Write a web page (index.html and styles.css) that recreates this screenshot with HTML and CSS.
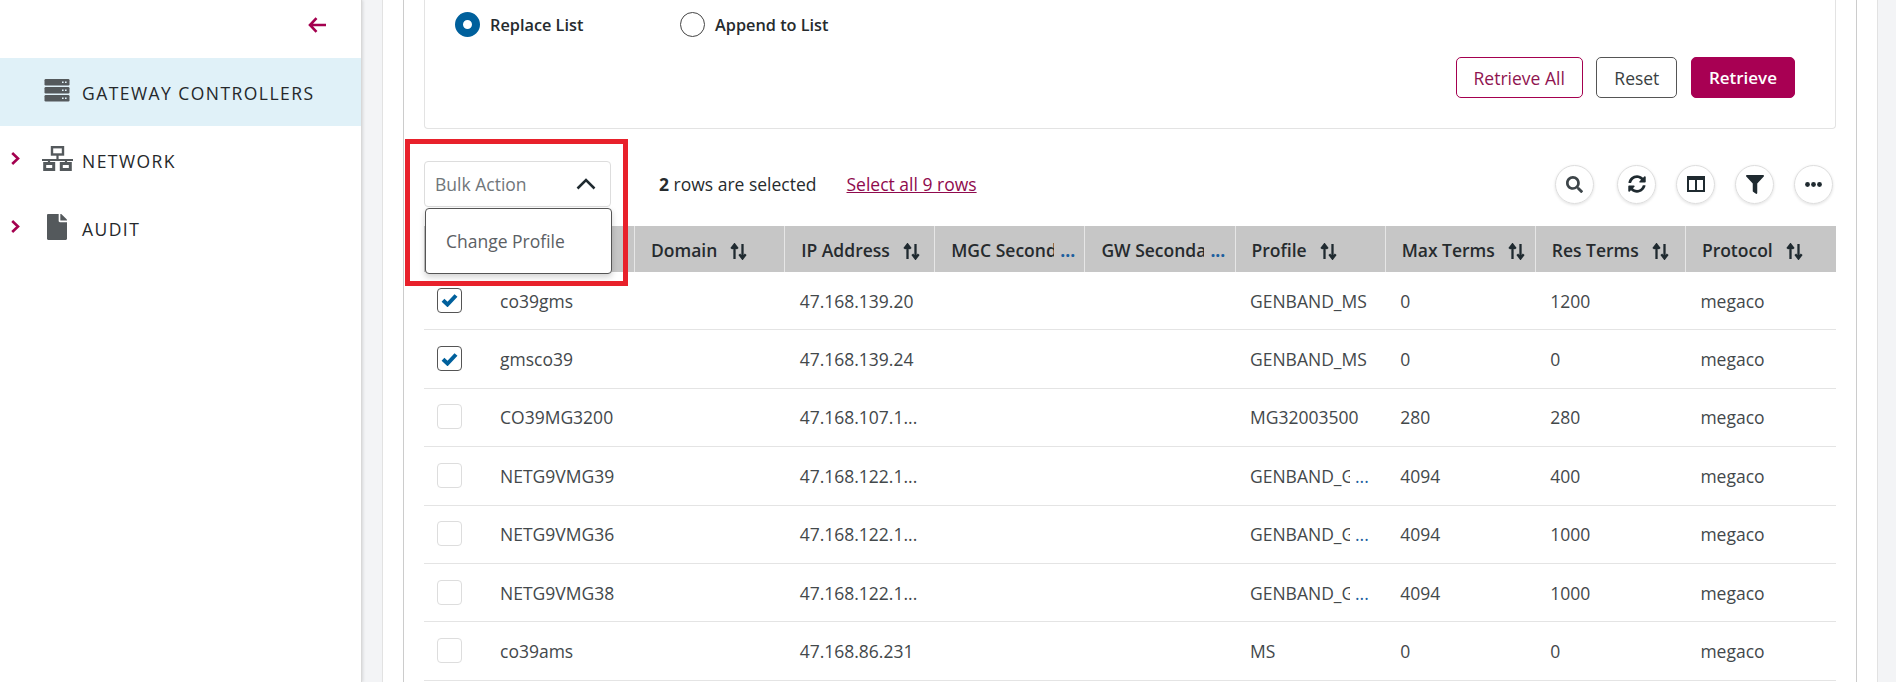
FILE: index.html
```html
<!DOCTYPE html>
<html lang="en">
<head>
  <meta charset="UTF-8" />
  <title>Gateway Controllers</title>
  <link rel="stylesheet" href="styles.css">
</head>
<body>
  <div class="page">
    <aside class="sidebar">
      <div class="sidebar-top">
        <svg class="back-arrow" viewBox="0 0 18 16"><path d="M8.500 1.200 2 8l6.500 6.800M2.500 8H18" fill="none" stroke="#a4004f" stroke-width="2.600"/></svg>
      </div>
      <div class="nav-item active">
        <span class="nav-chevron"></span>
        <span class="nav-icon">
          <svg width="26" height="23" viewBox="0 0 26 23">
            <rect x="0.5" y="0" width="25" height="6.4" rx="1.2" fill="#54595c"/>
            <rect x="0.5" y="8" width="25" height="6.4" rx="1.2" fill="#54595c"/>
            <rect x="0.5" y="16" width="25" height="6.4" rx="1.2" fill="#54595c"/>
            <path d="M18 3.2h1.6M21 3.2h1.6M18 11.2h1.6M21 11.2h1.6M18 19.2h1.6M21 19.2h1.6" stroke="#e0f1f8" stroke-width="1.6"/>
          </svg>
        </span>
        <span class="nav-label">GATEWAY CONTROLLERS</span>
      </div>
      <div class="nav-item">
        <svg class="nav-chevron" viewBox="0 0 9 13"><path d="M1.200 1 7 6.500 1.200 12" fill="none" stroke="#a4004f" stroke-width="2.600"/></svg>
        <span class="nav-icon">
          <svg width="31" height="25" viewBox="0 0 31 25">
            <rect x="10" y="1.200" width="11" height="7.300" fill="none" stroke="#54595c" stroke-width="2.400"/>
            <path d="M15.500 9v5M0 14h31M7 14v3M24 14v3" stroke="#54595c" stroke-width="2.200"/>
            <rect x="2.700" y="17.500" width="9" height="6" fill="none" stroke="#54595c" stroke-width="3"/>
            <rect x="19.300" y="17.500" width="9" height="6" fill="none" stroke="#54595c" stroke-width="3"/>
          </svg>
        </span>
        <span class="nav-label">NETWORK</span>
      </div>
      <div class="nav-item">
        <svg class="nav-chevron" viewBox="0 0 9 13"><path d="M1.200 1 7 6.500 1.200 12" fill="none" stroke="#a4004f" stroke-width="2.600"/></svg>
        <span class="nav-icon">
          <svg width="20" height="26" viewBox="0 0 384 512" preserveAspectRatio="none"><path fill="#54595c" d="M224 136V0H24C10.700 0 0 10.700 0 24v464c0 13.300 10.700 24 24 24h336c13.300 0 24-10.700 24-24V160H248c-13.200 0-24-10.800-24-24zm160-14.100v6.100H256V0h6.100c6.400 0 12.500 2.500 17 7l97.900 98c4.500 4.500 7 10.600 7 16.900z"/></svg>
        </span>
        <span class="nav-label">AUDIT</span>
      </div>
    </aside>

    <main class="main">
      <div class="card">
        <div class="inner">
          <section class="search-panel">
            <div class="radio-row">
              <label class="radio-item"><span class="radio on"></span>Replace List</label>
              <label class="radio-item"><span class="radio"></span>Append to List</label>
            </div>
            <div class="button-row">
              <button class="btn btn-outline">Retrieve All</button>
              <button class="btn btn-plain">Reset</button>
              <button class="btn btn-primary">Retrieve</button>
            </div>
          </section>

          <div class="toolbar">
            <div class="bulk">
              <span>Bulk Action</span>
              <svg width="20" height="12" viewBox="0 0 20 12"><path d="M1.500 10.500 10 2l8.500 8.500" fill="none" stroke="#1f2a30" stroke-width="2.500"/></svg>
            </div>
            <div class="bulk-menu">Change Profile</div>
            <div class="highlight"></div>
            <span class="selected-count"><b>2</b> rows are selected</span>
            <a class="select-all" href="#">Select all 9 rows</a>
            <div class="tools">
              <span class="tool tool-search">
                <svg width="17" height="17" viewBox="0 0 512 512"><path fill="#3d4549" d="M505 442.700 405.300 343c-4.500-4.500-10.600-7-17-7H372c27.600-35.300 44-79.700 44-128C416 93.100 322.900 0 208 0S0 93.100 0 208s93.100 208 208 208c48.300 0 92.700-16.400 128-44v16.300c0 6.400 2.500 12.500 7 17l99.700 99.700c9.400 9.400 24.600 9.400 33.900 0l28.300-28.300c9.400-9.400 9.400-24.600.1-34zM208 336c-70.700 0-128-57.200-128-128 0-70.700 57.200-128 128-128 70.700 0 128 57.200 128 128 0 70.700-57.200 128-128 128z"/></svg>
              </span>
              <span class="tool">
                <svg width="18" height="18" viewBox="0 0 512 512"><path fill="#1f2a30" d="M370.720 133.280C339.458 104.008 298.888 87.962 255.848 88c-77.458.068-144.328 53.178-162.791 126.850-1.344 5.363-6.122 9.150-11.651 9.150H24.103c-7.498 0-13.194-6.807-11.807-14.176C33.933 94.924 134.813 8 256 8c66.448 0 126.791 26.136 171.315 68.685L463.030 40.970C478.149 25.851 504 36.559 504 57.941V192c0 13.255-10.745 24-24 24H345.941c-21.382 0-32.090-25.851-16.971-40.971l41.750-41.749zM32 296h134.059c21.382 0 32.090 25.851 16.971 40.971l-41.750 41.750c31.262 29.273 71.835 45.319 114.876 45.280 77.418-.07 144.315-53.144 162.787-126.849 1.344-5.363 6.122-9.150 11.651-9.150h57.304c7.498 0 13.194 6.807 11.807 14.176C478.067 417.076 377.187 504 256 504c-66.448 0-126.791-26.136-171.315-68.685L48.970 471.030C33.851 486.149 8 475.441 8 454.059V320c0-13.255 10.745-24 24-24z"/></svg>
              </span>
              <span class="tool">
                <svg width="18" height="16" viewBox="0 0 18 16"><path d="M1 2.500h16v12.500H1zM9 3v12" fill="none" stroke="#1f2a30" stroke-width="2"/><path d="M0 0h18v4H0z" fill="#1f2a30"/></svg>
              </span>
              <span class="tool">
                <svg width="18" height="19" viewBox="0 0 512 512" preserveAspectRatio="none"><path fill="#1f2a30" d="M487.976 0H24.028C2.710 0-8.047 25.866 7.058 40.971L192 225.941V432c0 7.831 3.821 15.170 10.237 19.662l80 55.980C298.020 518.690 320 507.493 320 487.980V225.941l184.947-184.970C520.021 25.896 509.338 0 487.976 0z"/></svg>
              </span>
              <span class="tool">
                <svg width="17" height="5" viewBox="0 0 17 5"><circle cx="2.500" cy="2.500" r="2.400" fill="#1f2a30"/><circle cx="8.500" cy="2.500" r="2.400" fill="#1f2a30"/><circle cx="14.500" cy="2.500" r="2.400" fill="#1f2a30"/></svg>
              </span>
            </div>
          </div>

          <table class="grid">
            <colgroup>
              <col class="col-check"><col class="col-name"><col><col><col><col><col><col><col><col>
            </colgroup>
            <thead>
              <tr>
                <th></th>
                <th></th>
                <th>Domain<svg class="sort" viewBox="0 0 17 17"><use href="#sort-arrows"/></svg></th>
                <th>IP Address<svg class="sort" viewBox="0 0 17 17"><use href="#sort-arrows"/></svg></th>
                <th><span class="clip">MGC Secondary</span><span class="more head">...</span></th>
                <th><span class="clip">GW Secondary</span><span class="more head">...</span></th>
                <th>Profile<svg class="sort" viewBox="0 0 17 17"><use href="#sort-arrows"/></svg></th>
                <th>Max Terms<svg class="sort" viewBox="0 0 17 17"><use href="#sort-arrows"/></svg></th>
                <th>Res Terms<svg class="sort" viewBox="0 0 17 17"><use href="#sort-arrows"/></svg></th>
                <th>Protocol<svg class="sort" viewBox="0 0 17 17"><use href="#sort-arrows"/></svg></th>
              </tr>
            </thead>
            <tbody>
              <tr>
                <td><span class="check on"><svg width="17" height="14" viewBox="0 0 17 14"><path d="M2 7.200 6.500 11.500 15 2.500" fill="none" stroke="#00609c" stroke-width="4"/></svg></span></td>
                <td>co39gms</td><td>&nbsp;</td><td>47.168.139.20</td><td></td><td></td><td>GENBAND_MS</td><td>0</td><td>1200</td><td>megaco</td>
              </tr>
              <tr>
                <td><span class="check on"><svg width="17" height="14" viewBox="0 0 17 14"><path d="M2 7.200 6.500 11.500 15 2.500" fill="none" stroke="#00609c" stroke-width="4"/></svg></span></td>
                <td>gmsco39</td><td>&nbsp;</td><td>47.168.139.24</td><td></td><td></td><td>GENBAND_MS</td><td>0</td><td>0</td><td>megaco</td>
              </tr>
              <tr>
                <td><span class="check"></span></td>
                <td>CO39MG3200</td><td>&nbsp;</td><td>47.168.107.1...</td><td></td><td></td><td>MG32003500</td><td>280</td><td>280</td><td>megaco</td>
              </tr>
              <tr>
                <td><span class="check"></span></td>
                <td>NETG9VMG39</td><td>&nbsp;</td><td>47.168.122.1...</td><td></td><td></td><td><span class="clip">GENBAND_G9</span><span class="more">...</span></td><td>4094</td><td>400</td><td>megaco</td>
              </tr>
              <tr>
                <td><span class="check"></span></td>
                <td>NETG9VMG36</td><td>&nbsp;</td><td>47.168.122.1...</td><td></td><td></td><td><span class="clip">GENBAND_G9</span><span class="more">...</span></td><td>4094</td><td>1000</td><td>megaco</td>
              </tr>
              <tr>
                <td><span class="check"></span></td>
                <td>NETG9VMG38</td><td>&nbsp;</td><td>47.168.122.1...</td><td></td><td></td><td><span class="clip">GENBAND_G9</span><span class="more">...</span></td><td>4094</td><td>1000</td><td>megaco</td>
              </tr>
              <tr>
                <td><span class="check"></span></td>
                <td>co39ams</td><td>&nbsp;</td><td>47.168.86.231</td><td></td><td></td><td>MS</td><td>0</td><td>0</td><td>megaco</td>
              </tr>
            </tbody>
          </table>
        </div>
      </div>
    </main>
  </div>

  <svg class="sprite" width="0" height="0">
    <symbol id="sort-arrows" viewBox="0 0 17 17">
      <path d="M4.500 16V2M1.300 5.800 4.500 1.500l3.200 4.300M12.500 1v14M9.300 11.200l3.200 4.300 3.200-4.300" fill="none" stroke="#1f2a30" stroke-width="2.300"/>
    </symbol>
  </svg>
</body>
</html>
```

FILE: styles.css
```css
* {
  box-sizing: border-box;
}
body {
  margin: 0;
  font-family: "Open Sans", sans-serif;
  font-size: 17.5px;
  color: #262b2e;
  background: #fff;
}
.sprite {
  position: absolute;
}
.page {
  display: flex;
  height: 682px;
  overflow: hidden;
}

/* sidebar */
.sidebar {
  width: 362px;
  flex: none;
  background: #fff;
  border-right: 1px solid #d8d8d8;
  box-shadow: 1px 0 3px rgba(0, 0, 0, 0.12);
  position: relative;
}
.sidebar-top {
  height: 58px;
  display: flex;
  justify-content: flex-end;
  padding: 17px 35px 0 0;
}
.back-arrow {
  width: 18px;
  height: 16px;
}
.nav-item {
  height: 68px;
  display: flex;
  align-items: center;
  padding-left: 11px;
}
.nav-item.active {
  background: #e0f1f8;
}
.nav-chevron {
  width: 9px;
  height: 13px;
  flex: none;
  margin-top: -3px;
}
.nav-icon {
  width: 42px;
  margin-left: 16px;
  display: flex;
  justify-content: center;
  margin-right: 4px;
  margin-top: -3px;
}
.nav-label {
  font-size: 17.5px;
  letter-spacing: 1.45px;
  color: #25282b;
  margin-top: 2px;
}

/* main area */
.main {
  flex: 1;
  background: #f3f4f6;
  padding: 0 19px 0 20px;
}
.card {
  height: 100%;
  background: #fff;
  border-left: 1px solid #e2e2e2;
  border-right: 1px solid #e2e2e2;
  padding: 0 20px;
}
.inner {
  height: 100%;
  border-left: 1px solid #ccc;
  border-right: 1px solid #ccc;
  padding: 0 20px;
}

.search-panel {
  height: 129px;
  border: 1px solid #e3e3e3;
  border-top: none;
  border-radius: 0 0 4px 4px;
  padding: 12px 40px 0 30px;
}
.radio-row {
  display: flex;
  height: 25px;
}
.radio-item {
  width: 225px;
  display: flex;
  align-items: center;
  gap: 10px;
  font-weight: 600;
  font-size: 16.3px;
}
.radio {
  width: 25px;
  height: 25px;
  border-radius: 50%;
  border: 1px solid #444;
}
.radio.on {
  border: 8px solid #00609c;
  background: #fff;
}
.button-row {
  display: flex;
  justify-content: flex-end;
  gap: 13.500px;
  margin-top: 20px;
}
.btn {
  height: 41px;
  padding: 0 17px;
  font-family: inherit;
  font-size: 17.5px;
  border-radius: 5px;
  background: #fff;
  border: 1px solid #555;
  color: #3a3f42;
}
.btn-outline {
  border-color: #a4004f;
  color: #8f1450;
}
.btn-primary {
  background: #a80053;
  border-color: #a80053;
  color: #fff;
  font-size: 17px;
  font-weight: 600;
}

/* toolbar above the grid */
.toolbar {
  position: relative;
  display: flex;
  align-items: center;
  height: 97px;
  padding-top: 13px;
}
.bulk {
  width: 187px;
  height: 46px;
  border: 1px solid #ddd;
  border-radius: 4px;
  display: flex;
  align-items: center;
  justify-content: space-between;
  padding: 0 14px 0 10px;
  color: #70767a;
}
.bulk-menu {
  position: absolute;
  z-index: 3;
  left: 1px;
  top: 79px;
  width: 187px;
  height: 66px;
  background: #fff;
  border: 1px solid #555;
  border-radius: 4px;
  box-shadow: 0 3px 6px rgba(0, 0, 0, 0.18);
  padding: 20px 0 0 20px;
  color: #5b6064;
}
.highlight {
  position: absolute;
  z-index: 4;
  left: -19px;
  top: 10px;
  width: 223px;
  height: 147px;
  border: 5px solid #e8212b;
}
.selected-count {
  margin-left: 48px;
}
.select-all {
  margin-left: 30px;
  color: #8f0a4d;
}
.tools {
  margin-left: auto;
  display: flex;
  gap: 20px;
  margin-right: 3px;
}
.tool {
  width: 39px;
  height: 39px;
  border-radius: 50%;
  border: 1px solid #ddd;
  box-shadow: 0 1px 3px rgba(0, 0, 0, 0.12);
  display: flex;
  align-items: center;
  justify-content: center;
}
.tool-search {
  margin-right: 3px;
}

/* grid */
.grid {
  width: 1412px;
  table-layout: fixed;
  border-collapse: separate;
  border-spacing: 0;
}
.col-check {
  width: 61px;
}
.col-name {
  width: 150px;
}
.grid th {
  height: 46px;
  background: #c6c6c6;
  border-right: 1px solid #e6e6e6;
  text-align: left;
  padding: 2px 0 0 16px;
  font-weight: 600;
  white-space: nowrap;
}
.grid th:first-child {
  border-right: none;
}
.grid th:last-child {
  border-right: none;
}
.grid td {
  height: 58.400px;
  border-bottom: 1px solid #e4e4e4;
  padding: 0 0 0 14.500px;
  color: #43484b;
  white-space: nowrap;
}
.grid td:first-child {
  padding-left: 13px;
}
.grid td:nth-child(2) {
  padding-left: 15px;
}
.sort {
  width: 17px;
  height: 17px;
  margin-left: 13px;
  vertical-align: -3px;
}
.clip {
  display: inline-block;
  width: 100px;
  overflow: hidden;
  vertical-align: bottom;
}
th .clip {
  width: 103px;
}
.more {
  margin-left: 5px;
  color: #1d5f9f;
}
.more.head {
  margin-left: 6px;
  font-weight: 700;
}
.check {
  display: block;
  width: 25px;
  height: 25px;
  border: 1px solid #ddd;
  border-radius: 4px;
  margin-top: -1px;
}
.check.on {
  border-color: #555;
  display: flex;
  align-items: center;
  justify-content: center;
}
```
